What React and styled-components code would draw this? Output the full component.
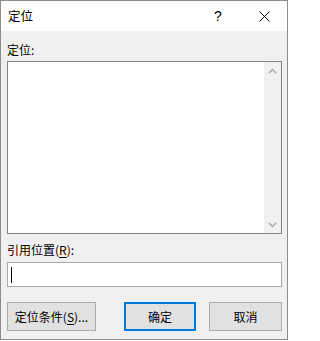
import React from 'react'
import styled, { createGlobalStyle } from 'styled-components'

const GlobalStyle = createGlobalStyle`
  html, body {
    margin: 0;
    padding: 0;
    background: #ffffff;
  }
  body {
    font-family: "Noto Sans CJK SC", "Liberation Sans", sans-serif;
    font-size: 12px;
    color: #000;
  }
`

const Window = styled.div`
  box-sizing: border-box;
  width: 288px;
  height: 340px;
  border: 1px solid #8c8c8c;
  display: flex;
  flex-direction: column;
  background: #f0f0f0;
`

const TitleBar = styled.div`
  height: 30px;
  background: #ffffff;
  display: flex;
  align-items: center;
  padding-left: 7px;
  font-size: 12.5px;
`

const Title = styled.span`
  flex: 1;
  line-height: 1;
`

const TitleButton = styled.div`
  width: 46px;
  height: 30px;
  display: flex;
  align-items: center;
  justify-content: center;
  font-family: "Liberation Sans", sans-serif;
  font-size: 14px;
`

const Body = styled.div`
  flex: 1;
  display: flex;
  flex-direction: column;
  padding: 10px 5px 0 6px;
`

const Label = styled.div`
  height: 17px;
  line-height: 17px;
  margin-bottom: ${({ gap }) => gap}px;
  u {
    text-decoration: underline;
    text-underline-offset: 2px;
  }
`

const ListBox = styled.div`
  box-sizing: border-box;
  height: 173px;
  background: #ffffff;
  border: 1px solid #828790;
  display: flex;
  justify-content: flex-end;
  margin-bottom: 7px;
`

const ScrollBar = styled.div`
  width: 17px;
  background: #f0f0f0;
  display: flex;
  flex-direction: column;
  justify-content: space-between;
`

const Arrow = styled.div`
  height: 17px;
  display: flex;
  align-items: center;
  justify-content: center;
  svg {
    transform: ${({ down }) => (down ? 'rotate(180deg)' : 'none')};
  }
`

const Input = styled.div`
  box-sizing: border-box;
  height: 25px;
  background: #ffffff;
  border: 1px solid #a9a9a9;
  display: flex;
  align-items: center;
  padding-left: 3px;
`

const Caret = styled.div`
  width: 1px;
  height: 16px;
  background: #000;
`

const ButtonRow = styled.div`
  display: flex;
  margin-top: 15px;
`

const Button = styled.div`
  box-sizing: border-box;
  width: ${({ w }) => w}px;
  height: 29px;
  background: #e1e1e1;
  border: ${({ primary }) => (primary ? '2px solid #0078d7' : '1px solid #adadad')};
  display: flex;
  align-items: center;
  justify-content: center;
  margin-left: ${({ ml }) => ml || 0}px;
  u {
    text-decoration: underline;
    text-underline-offset: 2px;
  }
`

const Chevron = () => (
  <svg width="9" height="6" viewBox="0 0 9 6">
    <path d="M1 5 L4.5 1.5 L8 5" fill="none" stroke="#a3a3a3" strokeWidth="1.3" />
  </svg>
)

export default function App() {
  return (
    <>
      <GlobalStyle />
      <Window>
        <TitleBar>
          <Title>定位</Title>
          <TitleButton>?</TitleButton>
          <TitleButton>
            <svg width="11" height="11" viewBox="0 0 11 11">
              <path d="M0.5 0.5 L10.5 10.5 M10.5 0.5 L0.5 10.5" stroke="#000" strokeWidth="1" />
            </svg>
          </TitleButton>
        </TitleBar>
        <Body>
          <Label gap={3}>定位:</Label>
          <ListBox>
            <ScrollBar>
              <Arrow>
                <Chevron />
              </Arrow>
              <Arrow down>
                <Chevron />
              </Arrow>
            </ScrollBar>
          </ListBox>
          <Label gap={4}>
            引用位置(<u>R</u>):
          </Label>
          <Input>
            <Caret />
          </Input>
          <ButtonRow>
            <Button w={89}>
              定位条件(<u>S</u>)...
            </Button>
            <Button w={72} primary ml={28}>
              确定
            </Button>
            <Button w={73} ml={13}>
              取消
            </Button>
          </ButtonRow>
        </Body>
      </Window>
    </>
  )
}
